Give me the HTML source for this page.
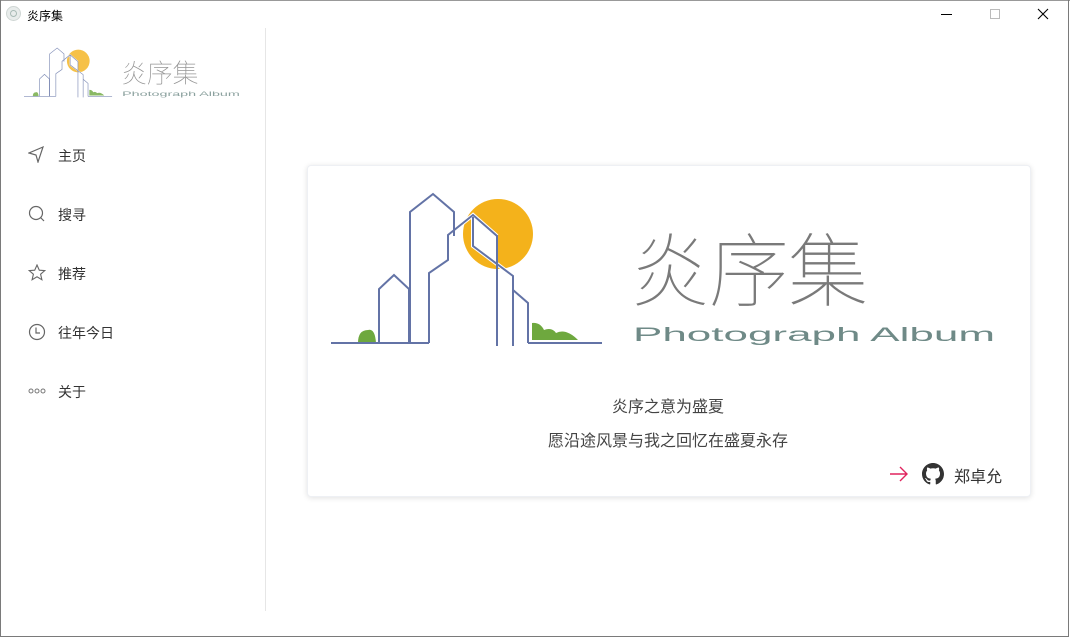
<!DOCTYPE html>
<html><head><meta charset="utf-8"><style>
*{margin:0;padding:0;box-sizing:border-box}
body{width:1070px;height:638px;background:#fff;position:relative;overflow:hidden;font-family:"Liberation Sans","Noto Sans CJK SC",sans-serif}
.win{position:absolute;left:0;top:0;width:1069px;height:637px;border:1px solid #7a7a7a;border-top:none}
.title{position:absolute;left:0;top:0;width:1070px;height:28px;border-top:1px solid #999}
.title .t{position:absolute;left:27px;top:6px;font-size:12px;color:#000}
.sep{position:absolute;left:265px;top:28px;width:1px;height:583px;background:#e6e6e6}
.nav{position:absolute;left:58px;font-size:14px;color:#333}
.ic{position:absolute;left:28px}
.card{position:absolute;left:307px;top:165px;width:724px;height:332px;border-radius:4px;box-shadow:0 1px 6px rgba(0,0,0,.12);border:1px solid #eef0f4;background:#fff}
.l1,.l2{position:absolute;width:1070px;left:0;text-align:center;font-size:16px;color:#444}
</style></head><body>
<div class="title">
<svg style="position:absolute;left:6px;top:5px" width="15" height="15"><circle cx="7.5" cy="7.5" r="7" fill="#e8eceb" stroke="#cfd6d4"/><circle cx="7.5" cy="7.5" r="3" fill="none" stroke="#a8bab5"/></svg>
<span class="t">炎序集</span>
<div style="position:absolute;left:941px;top:13px;width:11px;height:1px;background:#000"></div>
<div style="position:absolute;left:990px;top:8px;width:10px;height:10px;border:1px solid #bbb"></div>
<svg style="position:absolute;left:1037px;top:7px" width="12" height="12"><path d="M1 1L11 11M11 1L1 11" stroke="#000" stroke-width="1.1"/></svg>
</div>
<div class="win"></div>
<div class="sep"></div>

<svg width="0" height="0" style="position:absolute"><defs>
<g id="logo">
<circle cx="498" cy="234" r="35" fill="#f4b21b"/>
<polygon points="473,217 497,236 497,262 473,246" fill="#fff"/>
<polygon points="454,236 454,212 448,235" fill="#fff"/>
<g fill="none" stroke="#fff" stroke-width="4">
<path d="M448 235L473 215L497 236M473 217V246L513 276"/>
</g>
<path d="M358 343Q358 330 368 330Q375 328 376 343Z" fill="#6ea83e"/>
<path d="M532 340V323Q540 322 544 330Q552 327 556 333Q566 328 578 340Z" fill="#6ea83e"/>
<g fill="none" stroke="#6373a6" stroke-width="2">
<path d="M331 343H429M528 343H602"/>
<path d="M379 343V289L394 275L409 289V343"/>
<path d="M410 343V212L433 194L454 212V236"/>
<path d="M429 343V273L448 260V235L473 215L497 236V346"/>
<path d="M473 217V246L513 276V346M513 290L528 303V343"/>
</g>
<text x="630" y="300" font-family="Noto Sans CJK SC,sans-serif" font-weight="100" font-size="80" fill="#7a7a7a" textLength="238" lengthAdjust="spacing">炎序集</text>
<text x="633" y="341" font-family="Liberation Sans,sans-serif" font-size="19" fill="#6f8a87" textLength="362" lengthAdjust="spacingAndGlyphs">Photograph Album</text>
</g></defs></svg>

<svg style="position:absolute;left:0;top:0" width="266" height="120"><g transform="translate(24,48) scale(0.325) translate(-331,-194)" opacity="0.8"><use href="#logo"/></g></svg>

<svg class="ic" style="top:146px" width="17" height="17" fill="none" stroke="#666" stroke-width="1.2"><path d="M15 1L1 7L8 9L10 16Z"/></svg>
<div class="nav" style="top:146px">主页</div>
<svg class="ic" style="top:205px" width="18" height="18" fill="none" stroke="#666" stroke-width="1.2"><circle cx="8" cy="8" r="6.5"/><path d="M12.5 12.5L16 16"/></svg>
<div class="nav" style="top:205px">搜寻</div>
<svg class="ic" style="top:264px" width="18" height="18" fill="none" stroke="#666" stroke-width="1.1"><path d="M9 1L11.3 6.2L16.8 6.6L12.6 10.2L13.9 15.7L9 12.8L4.1 15.7L5.4 10.2L1.2 6.6L6.7 6.2Z"/></svg>
<div class="nav" style="top:264px">推荐</div>
<svg class="ic" style="top:323px" width="18" height="18" fill="none" stroke="#666" stroke-width="1.2"><circle cx="9" cy="9" r="7.5"/><path d="M8 4.5V10H12"/></svg>
<div class="nav" style="top:323px">往年今日</div>
<svg class="ic" style="top:388px" width="18" height="6" fill="none" stroke="#777" stroke-width="1"><circle cx="3" cy="3" r="2"/><circle cx="9" cy="3" r="2"/><circle cx="15" cy="3" r="2"/></svg>
<div class="nav" style="top:382px">关于</div>

<div class="card"></div>
<svg style="position:absolute;left:0;top:0" width="1070" height="400"><use href="#logo"/></svg>
<div class="l1" style="top:393px;left:133px">炎序之意为盛夏</div>
<div class="l2" style="top:427px;left:133px">愿沿途风景与我之回忆在盛夏永存</div>
<svg style="position:absolute;left:889px;top:466px" width="20" height="16" fill="none" stroke="#e0245e" stroke-width="1.4"><path d="M1 8H18M11 1L18 8L11 15"/></svg>
<svg style="position:absolute;left:922px;top:463px" width="22" height="22" viewBox="0 0 16 16"><path fill="#333" d="M8 0C3.580 0 0 3.58 0 8c0 3.54 2.29 6.53 5.47 7.59.4.07.55-.17.55-.38 0-.19-.01-.82-.01-1.49-2.01.37-2.530-.49-2.69-.94-.09-.23-.48-.94-.82-1.13-.28-.15-.68-.52-.01-.53.63-.01 1.08.58 1.23.82.72 1.21 1.870.87 2.33.66.07-.52.28-.87.51-1.07-1.78-.2-3.64-.89-3.64-3.95 0-.87.31-1.59.82-2.15-.08-.2-.36-1.02.08-2.12 0 0 .67-.21 2.2.82.64-.18 1.32-.27 2-.27.68 0 1.36.09 2 .27 1.53-1.04 2.2-.82 2.2-.82.44 1.1.16 1.92.08 2.12.51.56.82 1.27.82 2.15 0 3.07-1.87 3.75-3.65 3.95.29.25.54.73.54 1.48 0 1.070-.01 1.93-.01 2.2 0 .21.15.46.55.38A8.013 8.013 0 0016 8c0-4.42-3.58-8-8-8z"/></svg>
<div style="position:absolute;left:954px;top:463px;font-size:16px;color:#333">郑卓允</div>
</body></html>
